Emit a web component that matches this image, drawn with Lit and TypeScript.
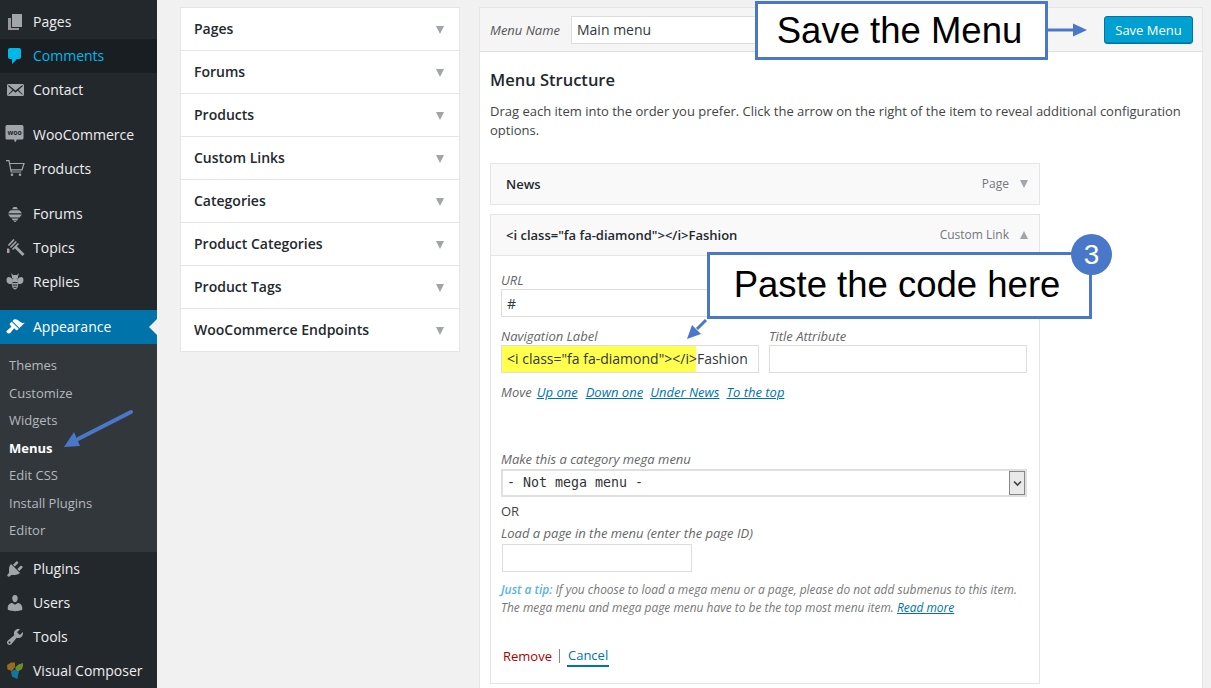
import { LitElement, html, css, svg } from "lit";
import { customElement } from "lit/decorators.js";

const G = "#a0a5aa";
const icons: Record<string, unknown> = {
  pages: svg`<path fill="${G}" d="M7 2h10v13H7z"/><path fill="#9a94a0" d="M3 6h3v10h8v2H3z"/>`,
  comments: svg`<path fill="#00b9eb" d="M5 2h9c1.100 0 2 .9 2 2v7c0 1.100-.9 2-2 2h-2l-5 5v-5H5c-1.100 0-2-.9-2-2V4c0-1.100.9-2 2-2z"/>`,
  contact: svg`<path fill="${G}" d="M19 14.500v-9c0-.83-.67-1.500-1.500-1.500H3.490c-.83 0-1.500.67-1.500 1.500v9c0 .83.67 1.500 1.500 1.500H17.500c.83 0 1.500-.67 1.500-1.500zm-1.310-9.110c.33.33.15.67-.03.84L13.600 9.950l3.900 4.060c.12.14.2.36.06.51-.13.16-.43.15-.56.05l-4.370-3.730-2.140 1.950-2.130-1.950-4.370 3.730c-.13.1-.43.11-.56-.05-.14-.15-.06-.37.06-.51l3.900-4.060-4.060-3.720c-.18-.17-.36-.51-.03-.84s.67-.17.95.07l6.240 5.040 6.250-5.040c.28-.24.62-.4.95-.07z"/>`,
  woo: svg`<path fill="${G}" d="M2 0h15a1.500 1.500 0 0 1 1.500 1.500v11.500a1.500 1.500 0 0 1-1.500 1.500h-5l-2 3-1-3H2a1.500 1.500 0 0 1-1.500-1.500V1.500A1.500 1.500 0 0 1 2 0z"/><text x="9.500" y="9.500" text-anchor="middle" font-size="6.800" font-weight="700" font-family="Open Sans" fill="#23282d">woo</text>`,
  cart: svg`<g fill="none" stroke="${G}" stroke-width="1.200"><path d="M1 1.700h3l2.200 11.300h10"/><path d="M4.500 4.500H19l-2 6.300H5.800"/></g><circle cx="7" cy="15.800" r="1.300" fill="${G}"/><circle cx="15" cy="15.800" r="1.300" fill="${G}"/>`,
  forums: svg`<path fill="${G}" d="M8.500 3h3l1.500 2.300H7zM5.500 6.300h9l2.500 3H3zM3 10.400h14l-2.500 3h-9zM6.500 14.500h7L12 16.500H8zM8.500 17h3L10 18.300z"/>`,
  topics: svg`<g fill="none" stroke="${G}"><path stroke-width="1.700" d="M3.500 7.500L9 1.500M5.500 9.500l5.800-6M7.500 11.500L13.500 5.500"/><path stroke-width="2.800" d="M10 8.500l8.500 8.500"/><path stroke-width="2" d="M3 10.500v4.500"/></g><path stroke="#8a5a50" stroke-width="1" d="M4.500 11v4"/>`,
  replies: svg`<g fill="${G}"><path d="M7.500 7.500C5 4 1.500 4.500 1.500 8c0 3.500 3 5 5.500 3.500zM12.500 7.500C15 4 18.500 4.500 18.500 8c0 3.500-3 5-5.500 3.500z"/><ellipse cx="10" cy="11.500" rx="3.300" ry="6"/><path d="M6 1l2 2h4l2-2-1 3.500v2H7v-2z"/></g><path stroke="#23282d" stroke-width="1" d="M7.500 10.500h5M7.500 13h5M8.500 15.300h3"/>`,
  appearance: svg`<path fill="#fff" d="M14.480 11.060L7.410 3.990l1.500-1.500c.5-.56 2.300-.47 3.510.32 1.210.8 1.430 1.280 2.910 2.100 1.180.64 2.450 1.260 4.450.85zm-.71.71L6.700 4.700 4.930 6.470c-.39.39-.39 1.020 0 1.410l1.060 1.060c.39.39.39 1.030 0 1.420-.6.6-1.430 1.110-2.210 1.690-.35.26-.7.53-1.010.84C1.430 13.230.91 14.620 2.100 15.800c1.180 1.190 2.570.67 3.910-.67.31-.31.58-.66.84-1.010.58-.78 1.090-1.610 1.690-2.210.39-.39 1.020-.39 1.410 0l1.060 1.060c.39.39 1.020.39 1.410 0z"/>`,
  plugins: svg`<path fill="${G}" d="M13.110 4.360L9.870 7.600 8 5.730l3.240-3.240c.35-.34 1.050-.2 1.560.32.52.51.66 1.210.31 1.550zm-8 1.770l.91-1.120 9.010 9.010-1.190.84c-.71.71-2.630 1.160-3.820 1.160H6.140L4.900 17.260c-.59.59-1.540.59-2.120 0-.59-.58-.59-1.530 0-2.120l1.240-1.240v-3.880c0-1.130.4-3.190 1.090-3.890zm7.260 3.970l3.240-3.240c.34-.35 1.040-.21 1.550.31.52.51.66 1.210.31 1.550l-3.240 3.250z"/>`,
  users: svg`<path fill="${G}" d="M10 9.250c-2.270 0-2.730-3.440-2.730-3.440C7 4.020 7.820 2 9.970 2c2.160 0 2.980 2.020 2.710 3.810 0 0-.41 3.440-2.680 3.440zm0 2.570L12.720 10c2.390 0 4.520 2.330 4.520 4.530v2.490s-3.650 1.130-7.240 1.130c-3.650 0-7.240-1.130-7.240-1.130v-2.490c0-2.250 1.940-4.480 4.470-4.480z"/>`,
  tools: svg`<path fill="${G}" d="M16.680 9.770c-1.340 1.340-3.300 1.670-4.950.99l-5.410 6.520c-.99.99-2.590.99-3.580 0s-.99-2.590 0-3.570l6.520-5.420c-.68-1.650-.35-3.610.99-4.950 1.280-1.280 3.120-1.620 4.720-1.060l-2.890 2.890 2.820 2.820 2.860-2.870c.53 1.580.18 3.390-1.080 4.650zM3.810 16.210c.4.39 1.040.39 1.430 0 .4-.4.4-1.040 0-1.430-.39-.4-1.030-.4-1.430 0-.39.39-.39 1.030 0 1.430z"/>`,
  vc: svg`<path fill="#9a6a1c" d="M2 4l4-2.500h4V6L7 10 2.500 8.500z"/><path fill="#6c8a2f" d="M10.500 6l3-2.500L18 2v3l-1 3-4 2.500-2.500-1.500z"/><path fill="#0f77a0" d="M6 10.500l3.500-1.800 4.500 1.800-1 3.500-.5 4-2.500-1-3-1.500z"/>`,
};

type Row = { label: string; icon: string; cls?: string };
const groups: Row[][] = [
  [{ label: "Pages", icon: "pages" }, { label: "Comments", icon: "comments", cls: "hover" }, { label: "Contact", icon: "contact" }],
  [{ label: "WooCommerce", icon: "woo" }, { label: "Products", icon: "cart" }],
  [{ label: "Forums", icon: "forums" }, { label: "Topics", icon: "topics" }, { label: "Replies", icon: "replies" }],
];
const bottom: Row[] = [
  { label: "Plugins", icon: "plugins" },
  { label: "Users", icon: "users" },
  { label: "Tools", icon: "tools" },
  { label: "Visual Composer", icon: "vc" },
];
const subs = ["Themes", "Customize", "Widgets", "Menus", "Edit CSS", "Install Plugins", "Editor"];
const panels = ["Pages", "Forums", "Products", "Custom Links", "Categories", "Product Categories", "Product Tags", "WooCommerce Endpoints"];

@customElement("app-root")
export class AppRoot extends LitElement {
  static styles = css`
    :host { display: block; position: relative; width: 1211px; height: 688px; overflow: hidden; background: #f1f1f1; font-family: "Open Sans", sans-serif; font-size: 13px; color: #444; }
    .page { display: flex; height: 688px; align-items: flex-start; }
    .side { width: 157px; height: 688px; flex: none; background: #23282d; padding-top: 5px; box-sizing: border-box; }
    .group { margin-bottom: 11px; }
    .row { display: flex; align-items: center; height: 34px; color: #eee; font-size: 14px; position: relative; }
    .row span { margin-top: -2px; }
    .row svg { width: 20px; height: 20px; margin-left: 5px; margin-right: 8px; flex: none; }
    .row.hover { background: #191e23; color: #00b9eb; }
    .row.cur { background: #0073aa; color: #fff; }
    .row.cur::after { content: ""; position: absolute; right: 0; top: 9px; border: 8px solid transparent; border-right-color: #f1f1f1; border-left-width: 0; }
    .sub { background: #32373c; height: 208px; padding-top: 8px; box-sizing: border-box; }
    .sub div { height: 27.500px; line-height: 27.500px; padding-left: 9px; font-size: 13px; color: #b4b9be; }
    .sub .on { color: #fff; font-weight: 700; }
    .acc { width: 280px; margin: 7px 0 0 23px; flex: none; background: #fff; border: 1px solid #e5e5e5; box-sizing: border-box; height: 345px; }
    .acc-row { display: flex; justify-content: space-between; align-items: center; height: 43px; box-sizing: border-box; padding: 0 15px 0 13px; font-size: 14px; font-weight: 600; color: #23282d; border-bottom: 1px solid #e5e5e5; }
    .acc-row span { margin-top: -2px; }
    .acc-row .tri { margin-top: 2px; }
    .acc-row:last-child { border-bottom: 0; height: 42px; }
    .tri { width: 0; height: 0; border-left: 4.500px solid transparent; border-right: 4.500px solid transparent; border-top: 8px solid #a0a5aa; flex: none; }
    .tri.up { border-top: 0; border-bottom: 8px solid #a0a5aa; }
    .panel { width: 724px; margin: 7px 0 0 19px; flex: none; height: 700px; background: #fff; border: 1px solid #e5e5e5; box-sizing: border-box; }
    .head { display: flex; align-items: center; height: 44px; background: #f5f5f5; border-bottom: 1px solid #dfdfdf; box-sizing: border-box; padding: 0 9px 0 10px; }
    .head em { color: #555; font-size: 13px; width: 81px; flex: none; }
    .head .name { width: 330px; height: 28px; line-height: 26px; background: #fff; border: 1px solid #ddd; box-sizing: border-box; padding-left: 5px; font-size: 14px; color: #32373c; }
    .save { margin-left: auto; width: 89px; height: 28px; line-height: 26px; box-sizing: border-box; text-align: center; background: #00a0d2; border: 1px solid #0073aa; border-radius: 3px; color: #fff; font-size: 13px; box-shadow: inset 0 -1px 0 #0086b4; }
    .content { padding: 0 10px; }
    h3 { margin: 16px 0 0; font-size: 16.500px; line-height: 24px; font-weight: 600; color: #23282d; }
    .hint { margin: 10px 0 0; line-height: 19px; font-size: 13px; color: #444; width: 700px; }
    .item { width: 550px; border: 1px solid #e5e5e5; box-sizing: border-box; background: #fff; }
    .item.news { margin-top: 23px; }
    .item.open { margin-top: 9px; height: 470px; }
    .bar { display: flex; align-items: center; height: 40px; box-sizing: border-box; background: #f9f9f9; padding: 0 11px 0 15px; font-size: 13px; font-weight: 600; color: #23282d; }
    .bar > span { margin-top: -1px; }
    .open .bar { height: 41px; border-bottom: 1px solid #e5e5e5; }
    .bar .type { margin-left: auto; margin-right: 11px; font-size: 12px; font-weight: 400; color: #72777c; }
    .body { padding: 16px 10px 0; font-size: 12px; }
    label { display: block; font-style: italic; font-size: 13px; color: #666; line-height: 17px; }
    .input { height: 28px; border: 1px solid #ddd; box-sizing: border-box; background: #fff; font-size: 14px; line-height: 26px; color: #32373c; }
    .url { width: 526px; padding-left: 5px; margin-bottom: 11px; line-height: 28px; }
    .two { display: flex; gap: 10px; }
    .two > div { width: 258px; }
    .nav { position: relative; white-space: nowrap; overflow: hidden; padding-left: 5px; }
    .mark { background: #ffff4d; position: absolute; left: 0; top: 0; bottom: 0; width: 194px; }
    .navtext { position: relative; }
    .move { margin-top: 10px; line-height: 18px; font-style: italic; color: #666; font-size: 13px; display: flex; gap: 7px; }
    .move span { margin-right: -2px; }
    .move a:first-of-type { margin-right: 1px; }
    a { color: #0073aa; text-decoration: underline; }
    .mega { margin-top: 49px; line-height: 19px; }
    .select { display: flex; align-items: center; width: 526px; height: 28px; border: 2px solid #dfdfdf; box-sizing: border-box; background: #fff; font-family: "DejaVu Sans Mono", monospace; font-size: 13.300px; color: #333; padding-left: 4px; padding-bottom: 2px; position: relative; }
    .caret { position: absolute; right: 0; top: 0; bottom: 0; width: 16px; background: #e9e9e9; border: 1px solid #888; box-sizing: border-box; display: flex; align-items: center; justify-content: center; }
    .caret svg { width: 9px; height: 7px; }
    .or { margin-top: 5px; line-height: 18px; font-size: 13px; color: #444; }
    .load { margin-top: 3px; margin-bottom: 1px; line-height: 20px; }
    .page-id { width: 190px; margin-left: 1px; }
    .tip { margin-top: 9px; line-height: 18px; font-size: 11.950px; font-style: italic; color: #777; white-space: nowrap; }
    .tip b { color: #5ab4e6; font-weight: 600; }
    .actions { margin-top: 28px; padding-left: 2px; line-height: 20px; font-size: 13px; display: flex; align-items: center; }
    .remove { color: #a00; }
    .divider { width: 1px; height: 14px; background: #888; margin: 0 7px 0 7px; }
    .cancel { color: #0073aa; text-decoration: none; border-bottom: 2px solid #0073aa; padding: 0 1px; }
    .callout { position: absolute; background: #fff; border: 3px solid #4a78c8; box-sizing: border-box; display: flex; align-items: center; justify-content: center; font-family: "Liberation Sans", Arial, sans-serif; color: #000; white-space: nowrap; font-size: 36.500px; }
    .c1 { left: 755px; top: 1px; width: 293px; height: 59px; padding-right: 4px; }
    .c2 { left: 707px; top: 252px; width: 385px; height: 67px; padding: 0 5px 2px 0; }
    .badge { position: absolute; left: 1071px; top: 234px; width: 41px; height: 41px; border-radius: 50%; background: #4a78c8; color: #fff; font-family: "Liberation Sans", Arial, sans-serif; font-size: 28px; display: flex; align-items: center; justify-content: center; }
    .art { position: absolute; left: 0; top: 0; pointer-events: none; }
  `;

  private row(r: Row, cls = "") {
    return html`<div class="row ${r.cls ?? ""} ${cls}"><svg viewBox="0 0 20 20">${icons[r.icon]}</svg><span>${r.label}</span></div>`;
  }

  render() {
    return html`
      <div class="page">
        <nav class="side">
          ${groups.map((g) => html`<div class="group">${g.map((r) => this.row(r))}</div>`)}
          ${this.row({ label: "Appearance", icon: "appearance" }, "cur")}
          <div class="sub">${subs.map((s) => html`<div class=${s === "Menus" ? "on" : ""}>${s}</div>`)}</div>
          ${bottom.map((r) => this.row(r))}
        </nav>
        <div class="acc">
          ${panels.map((p) => html`<div class="acc-row"><span>${p}</span><i class="tri"></i></div>`)}
        </div>
        <section class="panel">
          <div class="head">
            <em>Menu Name</em>
            <div class="name">Main menu</div>
            <div class="save">Save Menu</div>
          </div>
          <div class="content">
            <h3>Menu Structure</h3>
            <p class="hint">Drag each item into the order you prefer. Click the arrow on the right of the item to reveal additional configuration options.</p>
            <div class="item news">
              <div class="bar"><span>News</span><span class="type">Page</span><i class="tri"></i></div>
            </div>
            <div class="item open">
              <div class="bar"><span>&lt;i class="fa fa-diamond"&gt;&lt;/i&gt;Fashion</span><span class="type">Custom Link</span><i class="tri up"></i></div>
              <div class="body">
                <label>URL</label>
                <div class="input url">#</div>
                <div class="two">
                  <div>
                    <label>Navigation Label</label>
                    <div class="input nav"><span class="mark"></span><span class="navtext">&lt;i class="fa fa-diamond"&gt;&lt;/i&gt;Fashion</span></div>
                  </div>
                  <div>
                    <label>Title Attribute</label>
                    <div class="input"></div>
                  </div>
                </div>
                <div class="move"><span>Move</span><a>Up one</a><a>Down one</a><a>Under News</a><a>To the top</a></div>
                <label class="mega">Make this a category mega menu</label>
                <div class="select">- Not mega menu -<span class="caret"><svg viewBox="0 0 9 7"><path d="M1 1.500l3.500 3.500L8 1.500" fill="none" stroke="#444" stroke-width="1.600"/></svg></span></div>
                <div class="or">OR</div>
                <label class="load">Load a page in the menu (enter the page ID)</label>
                <div class="input page-id"></div>
                <div class="tip"><b>Just a tip:</b> If you choose to load a mega menu or a page, please do not add submenus to this item.<br />The mega menu and mega page menu have to be the top most menu item. <a>Read more</a></div>
                <div class="actions"><span class="remove">Remove</span><i class="divider"></i><span class="cancel">Cancel</span></div>
              </div>
            </div>
          </div>
        </section>
      </div>
      <div class="callout c1">Save the Menu</div>
      <div class="callout c2">Paste the code here</div>
      <div class="badge">3</div>
      <svg class="art" width="1211" height="688" viewBox="0 0 1211 688">
        <path d="M1048 30h26" stroke="#4a78c8" stroke-width="3" fill="none"/>
        <path d="M1073 23.500l14 6.500-14 6.500z" fill="#4a78c8"/>
        <path d="M706 320l-9 9" stroke="#4a78c8" stroke-width="3" fill="none"/>
        <path d="M687 339l5-14 9 9z" fill="#4a78c8"/>
        <path d="M131 412L78 439" stroke="#4a78c8" stroke-width="4" stroke-linecap="round" fill="none"/>
        <path d="M64 447l10-15 6 14z" fill="#4a78c8"/>
      </svg>
    `;
  }
}
